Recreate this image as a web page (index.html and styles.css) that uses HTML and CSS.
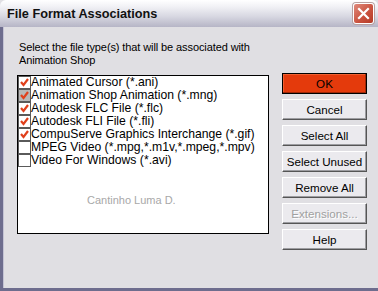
FILE: index.html
```html
<!DOCTYPE html>
<html lang="en">
<head>
    <meta charset="UTF-8">
    <title>File Format Associations</title>
    <link rel="stylesheet" href="styles.css">
</head>
<body>
    <div class="window">
        <div class="titlebar">
            <span class="title">File Format Associations</span>
            <span class="close-btn">
                <svg width="13" height="13" viewBox="0 0 13 13">
                    <path d="M2 2 L11 11 M11 2 L2 11" stroke="#fff" stroke-width="2.2" stroke-linecap="square"/>
                </svg>
            </span>
        </div>
        <div class="dialog">
            <p class="prompt">Select the file type(s) that will be associated with<br>Animation Shop</p>
            <div class="main">
                <div class="listbox">
                    <div class="item"><span class="check on"></span>Animated Cursor (*.ani)</div>
                    <div class="item"><span class="check on grey"></span>Animation Shop Animation (*.mng)</div>
                    <div class="item"><span class="check on"></span>Autodesk FLC File (*.flc)</div>
                    <div class="item"><span class="check on"></span>Autodesk FLI File (*.fli)</div>
                    <div class="item"><span class="check on"></span>CompuServe Graphics Interchange (*.gif)</div>
                    <div class="item"><span class="check"></span>MPEG Video (*.mpg,*.m1v,*.mpeg,*.mpv)</div>
                    <div class="item"><span class="check"></span>Video For Windows (*.avi)</div>
                    <div class="watermark">Cantinho Luma D.</div>
                </div>
                <div class="buttons">
                    <button class="btn btn-default">OK</button>
                    <button class="btn">Cancel</button>
                    <button class="btn">Select All</button>
                    <button class="btn">Select Unused</button>
                    <button class="btn">Remove All</button>
                    <button class="btn" disabled>Extensions...</button>
                    <button class="btn">Help</button>
                </div>
            </div>
        </div>
    </div>
</body>
</html>
```

FILE: styles.css
```css
* {
    margin: 0;
    padding: 0;
    box-sizing: border-box;
}

body {
    width: 378px;
    height: 291px;
    overflow: hidden;
    font-family: 'Liberation Sans', Arial, sans-serif;
    font-size: 11px;
    color: #000;
    background: #e0dfe3;
}

.window {
    width: 378px;
    height: 291px;
    display: flex;
    flex-direction: column;
}

.titlebar {
    height: 27px;
    display: flex;
    align-items: center;
    justify-content: space-between;
    padding: 0 4px 0 7px;
    border-radius: 6px 6px 0 0;
    background: linear-gradient(#ffffff 0%, #f1f1f5 25%, #d8d8e2 60%, #b6b5c6 100%);
}

.title {
    font-weight: bold;
    font-size: 12.7px;
    color: #111;
}

.close-btn {
    width: 21px;
    height: 21px;
    display: flex;
    align-items: center;
    justify-content: center;
    border: 1px solid #fff;
    border-radius: 3px;
    background: linear-gradient(135deg, #e08a7c, #c8503c 60%, #b43a26);
    box-shadow: 0 0 0 1px #b8a0a0;
}

.dialog {
    flex: 1;
    border-left: 3px solid #6e6d8e;
    border-bottom: 3px solid #6e6d8e;
    box-shadow: inset 1px 0 #c4c3d4;
    padding: 14px 0 0 14px;
}

.prompt {
    line-height: 13px;
    margin-left: 2px;
    margin-bottom: 6px;
    letter-spacing: -0.1px;
}

.main {
    display: flex;
    align-items: flex-start;
    gap: 13px;
}

.listbox {
    width: 252px;
    height: 159px;
    margin-top: 2px;
    background: #fff;
    border: 1px solid #000;
}

.item {
    height: 13px;
    line-height: 13px;
    display: flex;
    align-items: center;
    white-space: nowrap;
    font-size: 12.2px;
}

.check {
    width: 13px;
    height: 13px;
    flex-shrink: 0;
    border: 1px solid #5a5a5a;
    background: #fff;
}

.check.on {
    background: #fff url("data:image/svg+xml;utf8,<svg xmlns='http://www.w3.org/2000/svg' width='11' height='11'><path d='M2 5 L4.5 8 L9 2' fill='none' stroke='%23e0401c' stroke-width='2.2'/></svg>") no-repeat center;
}

.check.on.grey {
    background-color: #b8b8b8;
}

.watermark {
    margin-top: 27px;
    padding-left: 69px;
    line-height: 13px;
    color: #a8a8a8;
}

.buttons {
    width: 85px;
    display: flex;
    flex-direction: column;
    gap: 5px;
}

.btn {
    height: 21px;
    font-family: 'Liberation Sans', Arial, sans-serif;
    font-size: 11.6px;
    color: #000;
    background: #ebeaee;
    border: 1px solid;
    border-color: #fff #555 #555 #fff;
    box-shadow: inset -1px -1px #9d9da1;
}

.btn-default {
    background: #e43a0c;
    border: 1px solid #000;
    box-shadow: inset -1px -1px #a02808, inset 1px 1px #f06030;
}

.btn:disabled {
    color: #a0a0a0;
    text-shadow: 1px 1px #fff;
}
```
